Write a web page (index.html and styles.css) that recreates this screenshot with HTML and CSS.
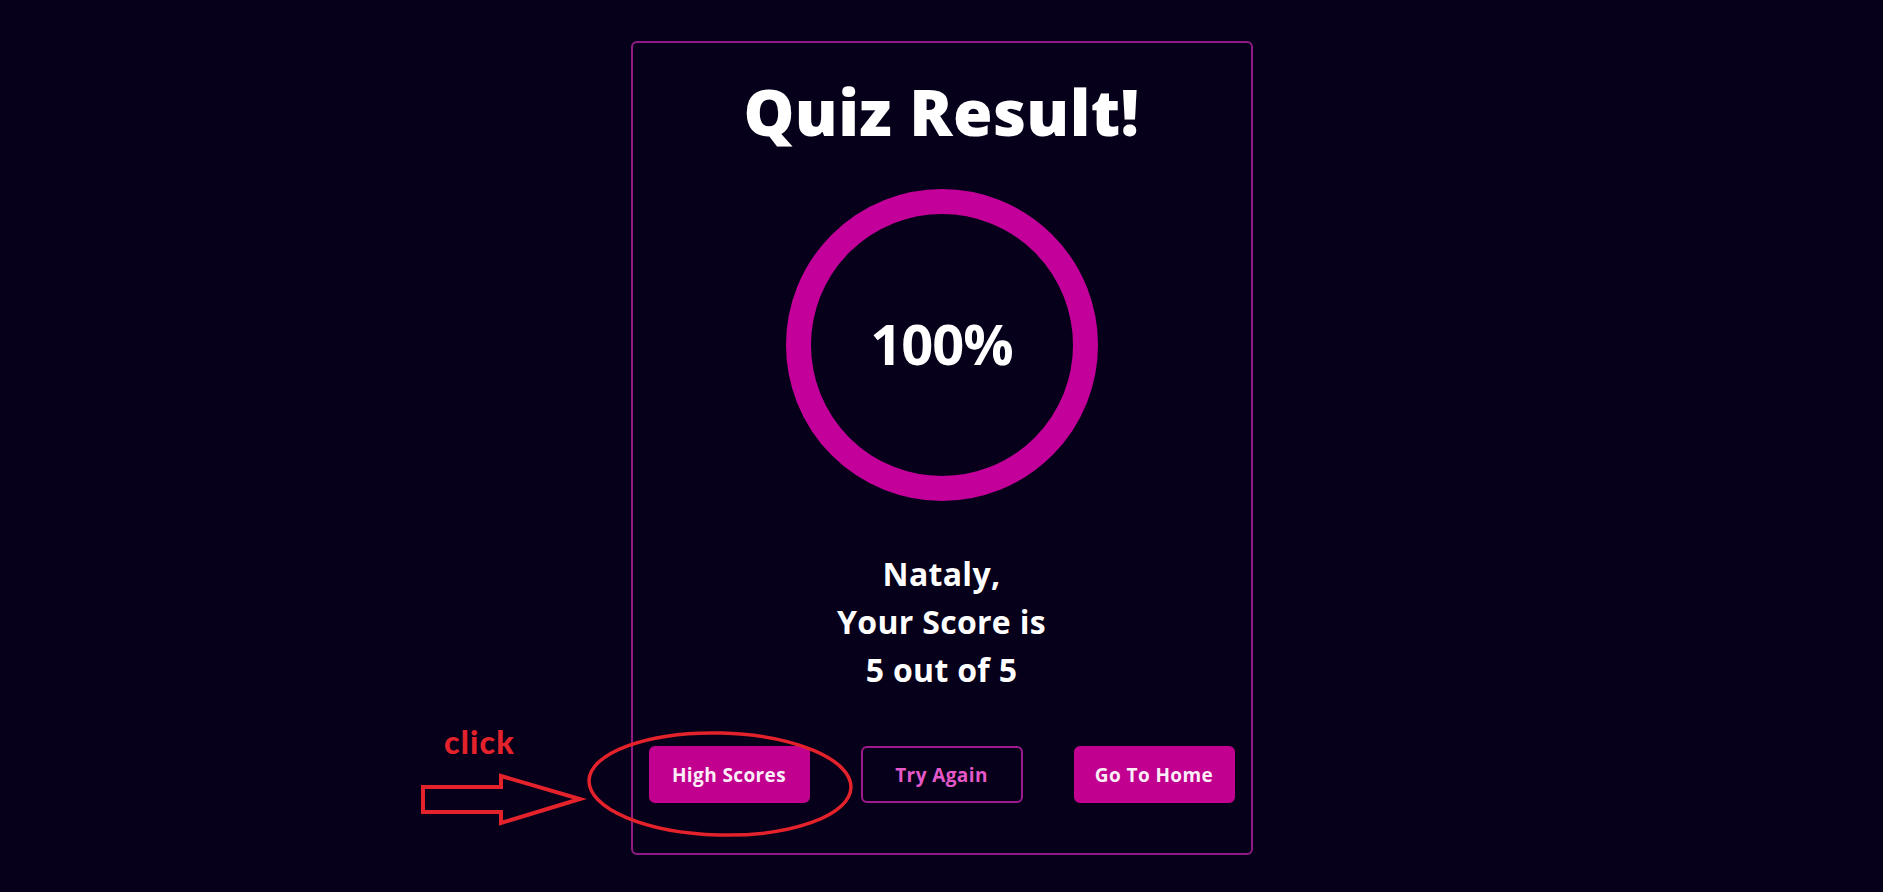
FILE: index.html
```html
<!DOCTYPE html>
<html lang="en">
<head>
<meta charset="utf-8">
<title>Quiz Result</title>
<link rel="stylesheet" href="styles.css">
</head>
<body>
<main class="card">
  <h1 class="title">Quiz Result!</h1>
  <div class="ring"><span class="percent">100%</span></div>
  <p class="score">Nataly,<br>Your Score is<br>5 out of 5</p>
  <div class="actions">
    <button class="btn btn-fill">High Scores</button>
    <button class="btn btn-outline">Try Again</button>
    <button class="btn btn-fill">Go To Home</button>
  </div>
</main>
<div class="note">click</div>
<svg class="marks" width="1883" height="892" viewBox="0 0 1883 892" xmlns="http://www.w3.org/2000/svg">
  <ellipse cx="720" cy="784" rx="131" ry="51" fill="none" stroke="#e3222b" stroke-width="3.5" transform="rotate(1.5 720 784)"/>
  <polygon points="423,787 501,787 501,776 580,799 501,823 501,812 423,812" fill="none" stroke="#e3222b" stroke-width="4" stroke-linejoin="miter"/>
</svg>
</body>
</html>
```
FILE: styles.css
```css
* { box-sizing: border-box; }
html, body {
  margin: 0;
  padding: 0;
  background: #06001a;
  height: 892px;
  overflow: hidden;
  font-family: "Open Sans", "Noto Sans", sans-serif;
  color: #ffffff;
}
.card {
  width: 622px;
  margin: 41px auto 0;
  border: 2px solid #8f1a86;
  border-radius: 6px;
  padding: 29px 16px 50px;
  display: flex;
  flex-direction: column;
  align-items: center;
}
.title {
  margin: 0;
  height: 80px;
  line-height: 80px;
  font-size: 64px;
  font-weight: 800;
  letter-spacing: 0.4px;
}
.ring {
  margin-top: 37px;
  width: 312px;
  height: 312px;
  border-radius: 50%;
  border: 25px solid #c3009a;
  display: flex;
  align-items: center;
  justify-content: center;
}
.percent {
  font-size: 56px;
  font-weight: 700;
  letter-spacing: -1px;
  line-height: 1;
  margin-top: -4px;
}
.score {
  margin: 49px 0 0;
  font-size: 32px;
  line-height: 48px;
  font-weight: 700;
  text-align: center;
  letter-spacing: 0.3px;
}
.actions {
  margin-top: 52px;
  align-self: stretch;
  display: flex;
  justify-content: space-between;
}
.btn {
  width: 161px;
  height: 57px;
  border-radius: 6px;
  font-family: "Open Sans", "Noto Sans", sans-serif;
  font-size: 19px;
  font-weight: 700;
  letter-spacing: 0.4px;
  padding: 0;
  cursor: pointer;
}
.btn-fill {
  background: #c1008f;
  border: 2px solid #c1008f;
  color: #fbeef8;
}
.btn-outline {
  width: 162px;
  background: transparent;
  border: 2px solid #9e1a8e;
  color: #e458c9;
}
.note {
  position: absolute;
  left: 444px;
  top: 722px;
  font-family: "Lato", "Open Sans", sans-serif;
  font-weight: 900;
  font-size: 32px;
  line-height: 40px;
  color: #e3222b;
  letter-spacing: 1.2px;
}
.marks {
  position: absolute;
  left: 0;
  top: 0;
  pointer-events: none;
}
```
